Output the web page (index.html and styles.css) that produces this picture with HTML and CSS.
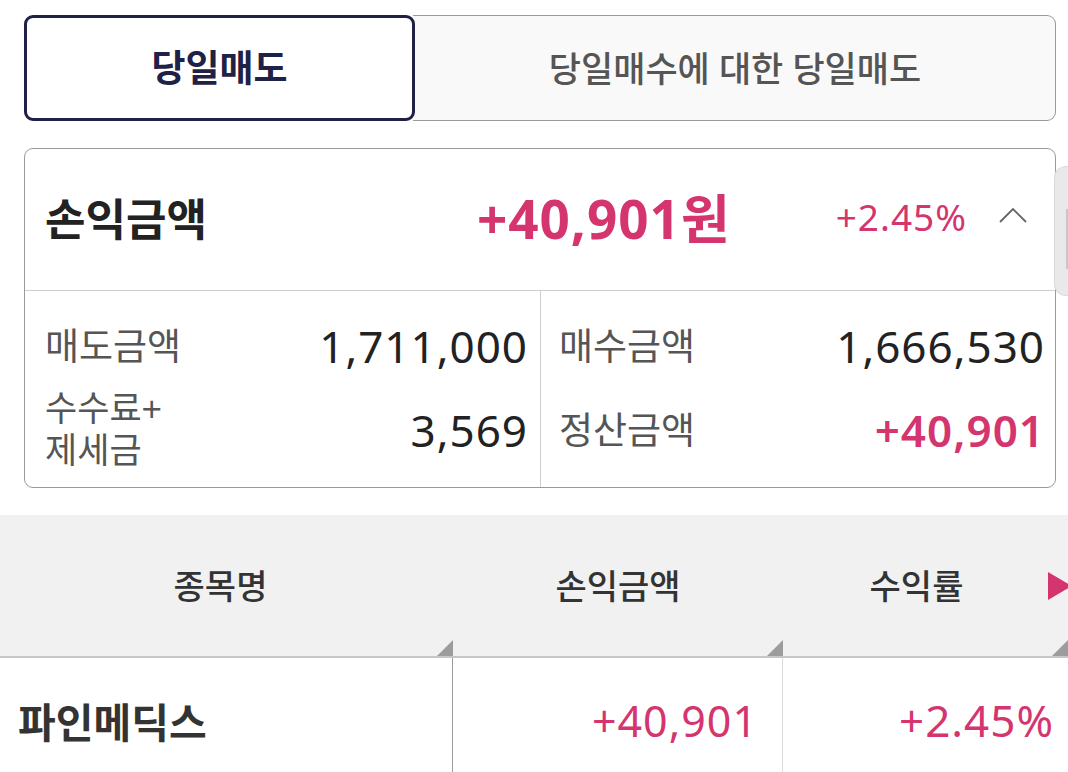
FILE: index.html
```html
<!DOCTYPE html>
<html lang="ko">
<head>
<meta charset="utf-8">
<link rel="stylesheet" href="styles.css">
</head>
<body>
<div class="page">
  <div class="tabs">
    <div class="tab tab-active">당일매도</div>
    <div class="tab tab-other">당일매수에 대한 당일매도</div>
  </div>

  <div class="card">
    <div class="card-head">
      <div class="head-title">손익금액</div>
      <div class="head-amount">+40,901원</div>
      <div class="head-pct">+2.45%</div>
      <svg class="chevron" width="28" height="16" viewBox="0 0 28 16"><path d="M1 15 L14 2 L27 15" fill="none" stroke="#666" stroke-width="1.8"/></svg>
    </div>
    <div class="card-grid">
      <div class="col col-left">
        <div class="row"><span class="lbl">매도금액</span><span class="val">1,711,000</span></div>
        <div class="row"><span class="lbl lbl-two"><span class="lbl-line">수수료+</span><span class="lbl-line">제세금</span></span><span class="val">3,569</span></div>
      </div>
      <div class="col col-right">
        <div class="row"><span class="lbl">매수금액</span><span class="val">1,666,530</span></div>
        <div class="row"><span class="lbl">정산금액</span><span class="val val-pink">+40,901</span></div>
      </div>
    </div>
  </div>

  <div class="table">
    <div class="thead">
      <div class="th th-1">종목명</div>
      <div class="th th-2">손익금액</div>
      <div class="th th-3">수익률<span class="more-arrow"></span></div>
    </div>
    <div class="tbody">
      <div class="td td-1">파인메딕스</div>
      <div class="td td-2">+40,901</div>
      <div class="td td-3">+2.45%</div>
    </div>
  </div>

  <div class="side-handle"><span class="handle-bar"></span></div>
</div>
</body>
</html>
```

FILE: styles.css
```css
* { box-sizing: border-box; }
html, body { margin: 0; padding: 0; background: #fff; }
body {
  font-family: "Noto Sans", "Noto Sans CJK KR", sans-serif;
  color: #222;
  overflow: hidden;
}
.page { position: relative; width: 1068px; height: 772px; overflow: hidden; }

/* tabs */
.tabs {
  display: flex;
  margin: 15px 12px 0 24px;
  height: 106px;
}
.tab {
  display: flex;
  align-items: center;
  justify-content: center;
  padding-bottom: 4px;
}
.tab-active {
  width: 391px;
  border: 3px solid #1f2146;
  border-radius: 9px;
  background: #fff;
  color: #1f2146;
  font-size: 37px;
  font-weight: 700;
  position: relative;
  z-index: 1;
}
.tab-other {
  flex: 1;
  border: 1px solid #9a9a9a;
  border-left: none;
  border-radius: 0 9px 9px 0;
  background: #f9f9f9;
  color: #555;
  font-size: 35px;
  font-weight: 500;
  margin-left: -2px;
  padding-left: 2px;
}

/* summary card */
.card {
  margin: 27px 12px 0 24px;
  border: 1px solid #9a9a9a;
  border-radius: 9px;
  background: #fff;
}
.card-head {
  display: flex;
  align-items: center;
  height: 142px;
  padding: 0 28px 6px 20px;
  border-bottom: 1px solid #cfcfcf;
}
.head-title {
  font-size: 44px;
  font-weight: 700;
  color: #222;
}
.head-amount {
  margin-left: auto;
  margin-right: 105px;
  font-size: 53px;
  font-weight: 700;
  color: #d5356f;
  letter-spacing: 1px;
}
.head-pct {
  font-size: 37px;
  color: #d5356f;
  margin-right: 32px;
  letter-spacing: 1px;
}
.chevron { display: block; margin-top: -4px; }

.card-grid {
  display: grid;
  grid-template-columns: 516px 1fr;
  height: 196px;
}
.col-left { border-right: 1px solid #cfcfcf; padding: 13px 12px 0 20px; }
.col-right { padding: 13px 10px 0 18px; }
.row {
  display: flex;
  align-items: center;
  justify-content: space-between;
  height: 84px;
}
.lbl {
  font-size: 37px;
  color: #555;
  line-height: 42px;
}
.lbl-two {
  display: flex;
  flex-direction: column;
  font-family: "Liberation Sans", "Noto Sans CJK KR", sans-serif;
  font-size: 35px;
}
.lbl-line {
  display: block;
  height: 42px;
  line-height: 42px;
}
.val {
  font-size: 44px;
  color: #222;
  letter-spacing: 1px;
}
.val-pink { color: #d5356f; font-weight: 600; }

/* table */
.table { margin-top: 27px; }
.thead {
  display: grid;
  grid-template-columns: 453px 330px 1fr;
  height: 143px;
  background: #f1f1f1;
  border-bottom: 2px solid #c6c6c6;
}
.th {
  position: relative;
  display: flex;
  align-items: center;
  justify-content: center;
  font-size: 34px;
  font-weight: 500;
  color: #333;
  padding-bottom: 2px;
}
.th-1 { padding-right: 12px; }
.th::after {
  content: "";
  position: absolute;
  right: 0;
  bottom: 0;
  width: 0;
  height: 0;
  border-left: 16px solid transparent;
  border-bottom: 16px solid #9c9c9c;
}
.th-3 { padding-right: 18px; }
.more-arrow {
  position: absolute;
  right: -4px;
  top: 57px;
  width: 0;
  height: 0;
  border-left: 24px solid #d5356f;
  border-top: 14px solid transparent;
  border-bottom: 14px solid transparent;
}

.tbody {
  display: grid;
  grid-template-columns: 453px 330px 1fr;
  height: 130px;
}
.td {
  display: flex;
  align-items: center;
  padding-bottom: 6px;
}
.td-1 {
  border-right: 1px solid #9c9c9c;
  padding-left: 18px;
  font-size: 41px;
  font-weight: 700;
  color: #333;
}
.td-2 {
  border-right: 1px solid #dcdcdc;
  justify-content: flex-end;
  padding-right: 24px;
  font-size: 43px;
  letter-spacing: 1px;
  color: #d5356f;
}
.td-3 {
  justify-content: flex-end;
  padding-right: 14px;
  font-size: 44px;
  letter-spacing: 1px;
  color: #d5356f;
}

/* side handle overlay */
.side-handle {
  position: absolute;
  top: 166px;
  right: 0;
  width: 14px;
  height: 130px;
  background: #e9e9e9;
  border: 1px solid #dadada;
  border-right: none;
  border-radius: 12px 0 0 12px;
}
.handle-bar {
  position: absolute;
  right: 0;
  top: 42px;
  width: 2px;
  height: 60px;
  background: #c8c8c8;
}
```
